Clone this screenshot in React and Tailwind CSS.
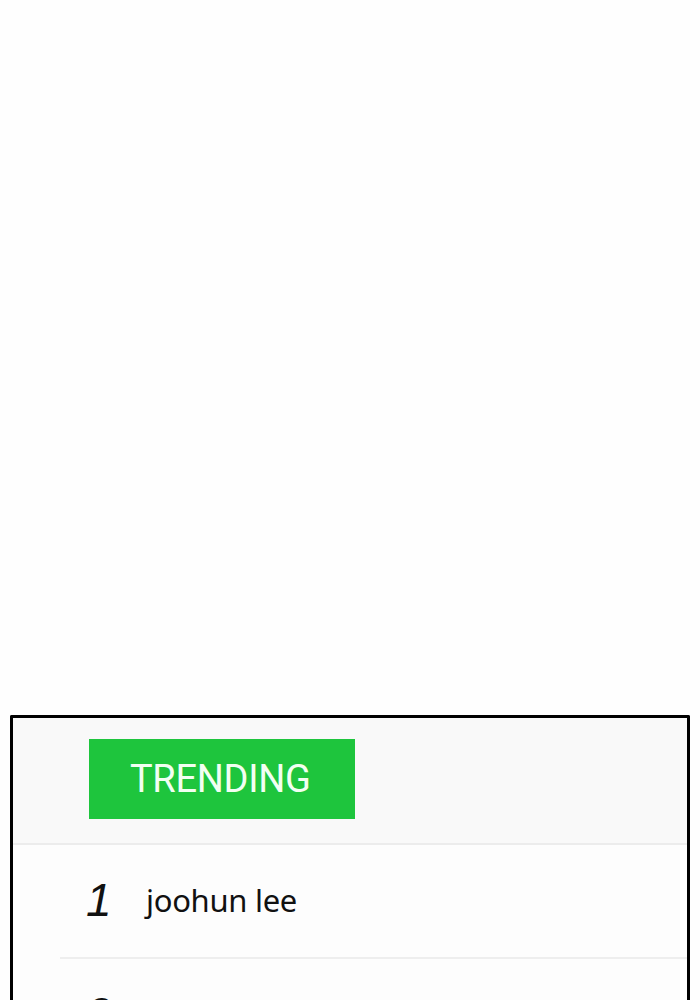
import React from "react";

const rows = [
  { rank: 1, name: "joohun lee" },
  { rank: 2, name: "" },
];

const App = () => {
  return (
    <div className="w-[700px] h-[1000px] overflow-hidden bg-[#fefefe] font-['Roboto',sans-serif]">
      <div className="h-[715px]" />
      <div className="mx-[10px] border-[3px] border-b-0 border-black rounded-tl-[2px] rounded-tr-[2px]">
        {/* header with tab */}
        <div className="h-[125px] bg-[#f9f9f9] pl-[76px] pt-[21px]">
          <div className="w-[266px] h-[80px] bg-[#1ec53d] flex items-center pl-[41px]">
            <span className="text-[38px] leading-none text-[#f2fff2] tracking-[-0.3px]">TRENDING</span>
          </div>
        </div>
        <div className="h-[2px] bg-[#ececec]" />

        {/* list */}
        <div className="bg-[#fdfdfd]">
          {rows.map((row) => (
            <div key={row.rank}>
              <div className="h-[112px] flex items-center pl-[73px]">
                <span className="w-[60px] text-[46px] italic font-light leading-none text-[#111] font-['Liberation_Sans',sans-serif] mt-[-2px]">
                  {row.rank}
                </span>
                <span className="text-[31px] leading-none text-[#111] font-['Noto_Sans',sans-serif] tracking-[-0.3px] mt-[-2px]">
                  {row.name}
                </span>
              </div>
              <div className="ml-[47px] h-[2px] bg-[#eeeeee]" />
            </div>
          ))}
        </div>
      </div>
    </div>
  );
};

export default App;
